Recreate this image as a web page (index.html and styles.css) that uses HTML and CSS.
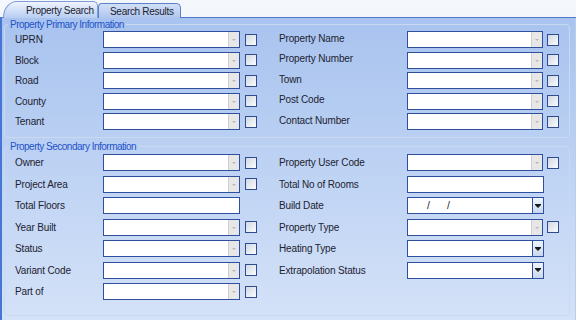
FILE: index.html
```html
<!DOCTYPE html>
<html lang="en">

<head>
    <meta charset="UTF-8">
    <title>Property Search</title>
    <link rel="stylesheet" href="styles.css">
</head>

<body>
    <nav class="tabs">
        <div class="tab active">Property Search</div>
        <div class="tab">Search Results</div>
    </nav>
    <main class="panel">
        <fieldset class="group primary">
            <legend>Property Primary Information</legend>
            <div class="fields">
                <div class="field"><span class="label">UPRN</span><span class="combo"><span class="drop"></span></span><span class="check"></span></div>
                <div class="field right"><span class="label">Property Name</span><span class="combo"><span class="drop"></span></span><span class="check"></span></div>

                <div class="field"><span class="label">Block</span><span class="combo"><span class="drop"></span></span><span class="check"></span></div>
                <div class="field right"><span class="label">Property Number</span><span class="combo"><span class="drop"></span></span><span class="check"></span></div>

                <div class="field"><span class="label">Road</span><span class="combo"><span class="drop"></span></span><span class="check"></span></div>
                <div class="field right"><span class="label">Town</span><span class="combo"><span class="drop"></span></span><span class="check"></span></div>

                <div class="field"><span class="label">County</span><span class="combo"><span class="drop"></span></span><span class="check"></span></div>
                <div class="field right"><span class="label">Post Code</span><span class="combo"><span class="drop"></span></span><span class="check"></span></div>

                <div class="field"><span class="label">Tenant</span><span class="combo"><span class="drop"></span></span><span class="check"></span></div>
                <div class="field right"><span class="label">Contact Number</span><span class="combo"><span class="drop"></span></span><span class="check"></span></div>
            </div>
        </fieldset>

        <fieldset class="group secondary">
            <legend>Property Secondary Information</legend>
            <div class="fields">
                <div class="field"><span class="label">Owner</span><span class="combo"><span class="drop"></span></span><span class="check"></span></div>
                <div class="field right"><span class="label">Property User Code</span><span class="combo"><span class="drop"></span></span><span class="check"></span></div>

                <div class="field"><span class="label">Project Area</span><span class="combo"><span class="drop"></span></span><span class="check"></span></div>
                <div class="field right"><span class="label">Total No of Rooms</span><span class="combo"></span></div>

                <div class="field"><span class="label">Total Floors</span><span class="combo"></span></div>
                <div class="field right"><span class="label">Build Date</span><span class="combo date"><span class="date-text">/</span><span class="date-text">/</span><span class="drop on"></span></span></div>

                <div class="field"><span class="label">Year Built</span><span class="combo"><span class="drop"></span></span><span class="check"></span></div>
                <div class="field right"><span class="label">Property Type</span><span class="combo"><span class="drop"></span></span><span class="check"></span></div>

                <div class="field"><span class="label">Status</span><span class="combo"><span class="drop"></span></span><span class="check"></span></div>
                <div class="field right"><span class="label">Heating Type</span><span class="combo"><span class="drop on"></span></span></div>

                <div class="field"><span class="label">Variant Code</span><span class="combo"><span class="drop"></span></span><span class="check"></span></div>
                <div class="field right"><span class="label">Extrapolation Status</span><span class="combo"><span class="drop on"></span></span></div>

                <div class="field"><span class="label">Part of</span><span class="combo"><span class="drop"></span></span><span class="check"></span></div>
            </div>
        </fieldset>
    </main>
</body>

</html>
```

FILE: styles.css
```css
* {
    box-sizing: border-box;
}

body {
    margin: 0;
    height: 320px;
    overflow: hidden;
    display: flex;
    flex-direction: column;
    font-family: "Liberation Sans", Arial, sans-serif;
    font-size: 10px;
    letter-spacing: -0.15px;
    color: #1c2230;
    background: linear-gradient(#f4f7fb, #dde6f3);
}

/* tab strip */
.tabs {
    display: flex;
    height: 18px;
    padding-left: 3px;
    align-items: flex-end;
    border-bottom: 1px solid #4f78cc;
}

.tab {
    height: 15px;
    padding: 1px 6px 0 11px;
    margin-bottom: -1px;
    background: linear-gradient(#d2e0f6, #aec6ee);
    border: 1px solid #5b81cc;
    border-bottom: none;
    border-radius: 4px 5px 0 0;
    letter-spacing: -0.3px;
    line-height: 14px;
}

.tab.active {
    width: 95px;
    height: 17px;
    padding: 2px 0 0 22px;
    background: linear-gradient(#eef3fc, #b6cdf2);
    border-color: #7f9dd4;
    border-top-left-radius: 14px 16px;
    position: relative;
    z-index: 1;
}

/* main panel */
.panel {
    flex: 1;
    padding: 1px 5px 0 2px;
    background: linear-gradient(#a8c3ef, #d4e2f8);
    border-left: 2px solid #4777d6;
    border-right: 1px solid #b9cdec;
}

.group {
    margin: 0;
    padding: 1px 4px 0 10px;
    border: 1px solid #c9d9f2;
    border-radius: 4px;
}

.group legend {
    padding: 0 2px;
    margin-left: -7px;
    color: #2352c9;
    letter-spacing: -0.5px;
}

.primary {
    height: 119px;
}

.secondary {
    margin-top: 3px;
    height: 175px;
}

.secondary .fields {
    margin-top: 1px;
    row-gap: 4.5px;
}

.fields {
    display: grid;
    grid-template-columns: 264px 280px;
    grid-auto-rows: 17px;
    row-gap: 3.6px;
}

.field {
    display: flex;
    align-items: center;
}

.label {
    width: 88px;
    flex-shrink: 0;
}

.right .label {
    width: 128px;
}

.primary .right .label {
    margin-top: -3px;
}

.combo {
    width: 137px;
    height: 17px;
    background: #fff;
    border: 1px solid #2f509e;
    display: flex;
    justify-content: flex-end;
}

.drop {
    width: 11px;
    height: 15px;
    background: #e7e7e7;
    border-left: 1px solid #cfcfcf;
    display: flex;
    align-items: center;
    justify-content: center;
}

.drop::after {
    content: '';
    border-left: 2px solid transparent;
    border-right: 2px solid transparent;
    border-top: 2px solid #b8b8b8;
    margin-top: 1px;
}

.drop.on {
    background: linear-gradient(#f0f5fd, #c9d8ef);
    border-left: 1px solid #2f509e;
}

.drop.on::after {
    border-left-width: 3px;
    border-right-width: 3px;
    border-top: 3px solid #1a1a1a;
    box-shadow: 0 -1px 0 #1a1a1a;
}

.date {
    justify-content: flex-start;
    padding-left: 19px;
}

.date-text {
    width: 20px;
    line-height: 15px;
    font-size: 10.5px;
}

.date .drop {
    margin-left: auto;
}

.check {
    width: 12px;
    height: 12px;
    margin-left: 5px;
    border: 1px solid #2f4c8e;
    background: linear-gradient(135deg, #cfd8e4, #fbfcfe);
}

.right .check {
    margin-left: 4px;
}
```
